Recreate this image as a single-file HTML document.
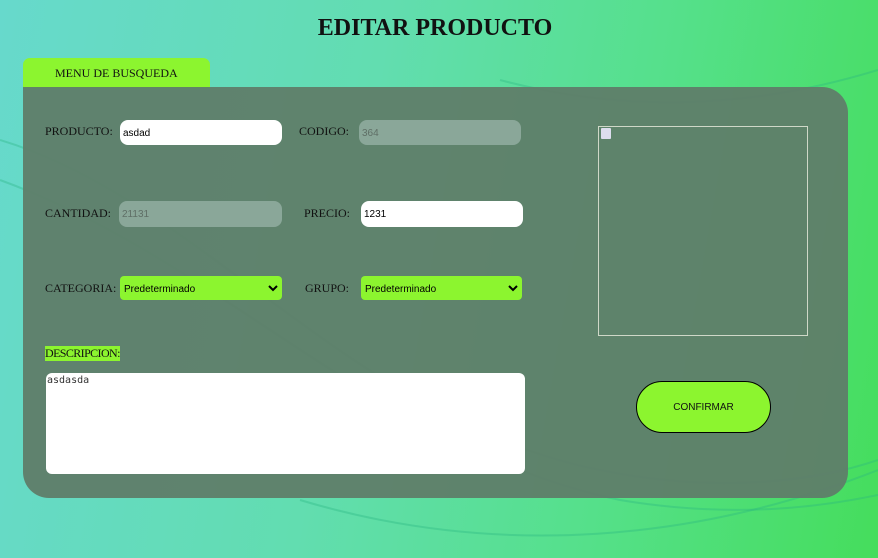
<!DOCTYPE html>
<html><head><style>
*{box-sizing:border-box;margin:0;padding:0}
body{width:878px;height:558px;overflow:hidden;position:relative;font-family:"Liberation Serif",serif;
background:linear-gradient(100deg,#67d9cc 0%,#62ddb0 40%,#55e08a 70%,#45dd5c 100%);}
.swirl{position:absolute;left:0;top:0}
h1{position:absolute;left:0;width:870px;top:15px;text-align:center;font-size:24px;font-weight:bold;color:#111}
.tab{position:absolute;left:23px;top:58px;width:187px;height:30px;background:#8cf52f;border-radius:7px 7px 0 0;font-size:12px;line-height:30px;color:#111;padding-left:32px}
.panel{position:absolute;left:23px;top:87px;width:825px;height:411px;background:rgba(95,125,105,0.95);border-radius:0 26px 26px 26px}
.l{position:absolute;font-size:12px;color:#111}
.in{position:absolute;height:25px;border-radius:8px;background:#fff;font-family:"Liberation Sans",sans-serif;font-size:10px;padding:2px 0 0 3px;line-height:23px;color:#000}
.dis{background:#8aa799;color:#5f6f66}
.sel{position:absolute;height:24px;border-radius:4px;background:#8cf52f;font-family:"Liberation Sans",sans-serif;font-size:10px;padding:3px 0 0 4px;line-height:21px;color:#000}
.sel svg{position:absolute;right:4px;top:8px}
</style></head><body>
<svg class="swirl" width="878" height="558" viewBox="0 0 878 558">
<g fill="none" stroke="rgba(40,180,130,0.35)" stroke-width="2">
<path d="M0 140 C200 200 350 420 600 470 C720 495 820 480 878 460"/>
<path d="M0 180 C220 260 380 450 620 500 C740 520 830 505 878 495"/>
<path d="M300 500 C500 560 700 540 878 470"/>
<path d="M500 80 C650 120 780 100 878 70"/>
</g>
</svg>
<h1>EDITAR PRODUCTO</h1>
<div class="tab">MENU DE BUSQUEDA</div>
<div class="panel"></div>
<div class="l" style="left:45px;top:124px">PRODUCTO:</div>
<div class="in" style="left:120px;top:120px;width:162px">asdad</div>
<div class="l" style="left:299px;top:124px">CODIGO:</div>
<div class="in dis" style="left:359px;top:120px;width:162px">364</div>
<div class="l" style="left:45px;top:206px">CANTIDAD:</div>
<div class="in dis" style="left:119px;top:201px;width:163px;height:26px">21131</div>
<div class="l" style="left:304px;top:206px">PRECIO:</div>
<div class="in" style="left:361px;top:201px;width:162px;height:26px">1231</div>
<div class="l" style="left:45px;top:281px">CATEGORIA:</div>
<div class="sel" style="left:120px;top:276px;width:162px">Predeterminado<svg width="10" height="8" viewBox="0 0 10 8"><path d="M1 2 L5 6 L9 2" stroke="#000" stroke-width="2" fill="none"/></svg></div>
<div class="l" style="left:305px;top:281px">GRUPO:</div>
<div class="sel" style="left:361px;top:276px;width:161px">Predeterminado<svg width="10" height="8" viewBox="0 0 10 8"><path d="M1 2 L5 6 L9 2" stroke="#000" stroke-width="2" fill="none"/></svg></div>
<div class="l" style="left:45px;top:346px;background:#8cf52f;height:15px;line-height:15px;letter-spacing:-0.6px">DESCRIPCION:</div>
<div style="position:absolute;left:46px;top:373px;width:479px;height:101px;background:#fff;border-radius:6px;font-family:'DejaVu Sans Mono',monospace;font-size:10px;color:#333;padding:2px 1px">asdasda</div>
<div style="position:absolute;left:598px;top:126px;width:210px;height:210px;border:1px solid #cfd8c8"></div>
<div style="position:absolute;left:601px;top:128px;width:10px;height:11px;background:#dde;border-radius:1px"></div>
<div style="position:absolute;left:636px;top:381px;width:135px;height:52px;border:1px solid #000;border-radius:26px;background:#8cf52f;font-family:'Liberation Sans',sans-serif;font-size:10px;text-align:center;line-height:52px;color:#111">CONFIRMAR</div>
</body></html>
